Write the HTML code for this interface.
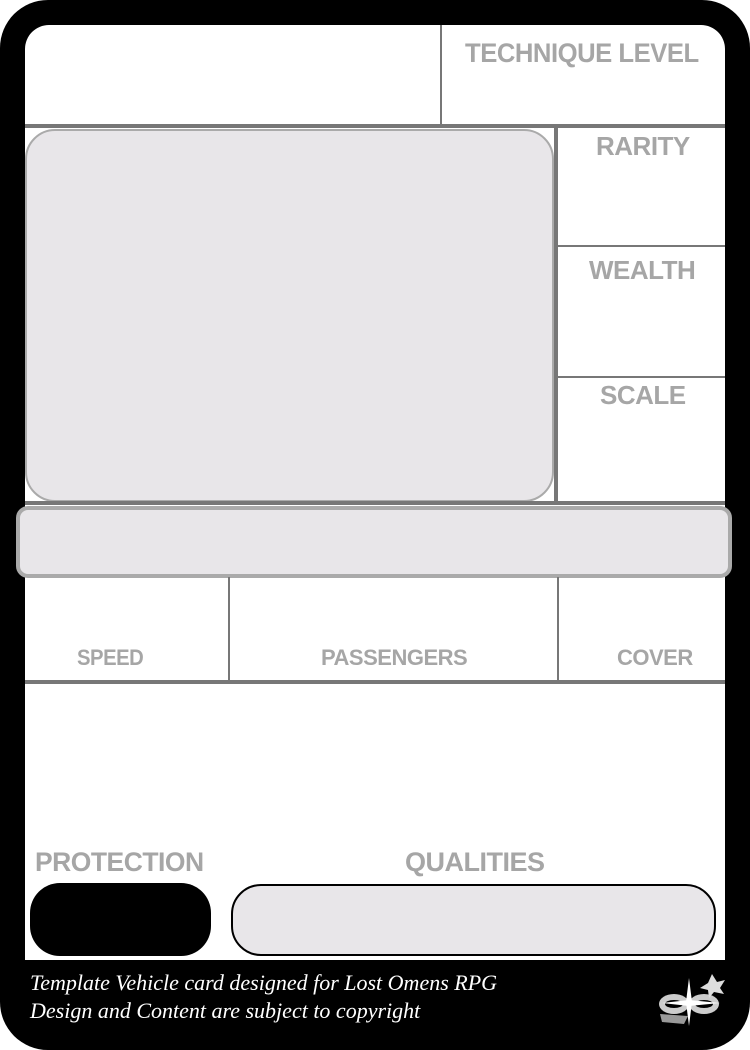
<!DOCTYPE html>
<html><head><meta charset="utf-8"><style>
html,body{margin:0;padding:0;background:#fff;}
body{width:750px;height:1050px;position:relative;overflow:hidden;}
.card{position:absolute;left:0;top:0;width:750px;height:1050px;background:#000;border-radius:48px;}
.inner{position:absolute;left:25px;top:25px;width:700px;height:935px;background:#fff;border-radius:24px 24px 0 0;overflow:hidden;}
.a{position:absolute;}
.lbl{position:absolute;font-family:"Liberation Sans Narrow","Liberation Sans",sans-serif;font-weight:bold;color:#a6a6a6;font-size:26px;letter-spacing:-0.5px;white-space:nowrap;transform-origin:0 0;}
.foot{position:absolute;left:30px;font-family:"Liberation Serif",serif;font-style:italic;color:#fff;font-size:22px;white-space:nowrap;}
</style></head><body>
<div class="card"></div>
<div class="inner"></div>
<div class="a" style="left:440px;top:25px;width:2px;height:101px;background:#777"></div>
<div class="a" style="left:25px;top:124px;width:700px;height:4px;background:#777"></div>
<div class="a" style="left:25px;top:129px;width:525px;height:369px;background:#e8e6e9;border:2px solid #aaa;border-radius:30px"></div>
<div class="a" style="left:554px;top:128px;width:4px;height:376px;background:#777"></div>
<div class="a" style="left:558px;top:245px;width:167px;height:2px;background:#777"></div>
<div class="a" style="left:558px;top:376px;width:167px;height:2px;background:#777"></div>
<div class="a" style="left:25px;top:501px;width:700px;height:4px;background:#777"></div>
<div class="a" style="left:16px;top:506px;width:708px;height:64px;background:#e8e6e9;border:4px solid #aaa;border-radius:12px"></div>
<div class="a" style="left:228px;top:577px;width:2px;height:104px;background:#777"></div>
<div class="a" style="left:557px;top:577px;width:2px;height:104px;background:#777"></div>
<div class="a" style="left:25px;top:680px;width:700px;height:4px;background:#777"></div>
<div class="lbl" style="left:465px;top:38px;font-size:27px;transform:scaleX(0.95)">TECHNIQUE LEVEL</div>
<div class="lbl" style="left:596px;top:131px">RARITY</div>
<div class="lbl" style="left:589px;top:255px">WEALTH</div>
<div class="lbl" style="left:600px;top:380px">SCALE</div>
<div class="lbl" style="left:77px;top:645px;font-size:22px;transform:scaleX(0.92)">SPEED</div>
<div class="lbl" style="left:321px;top:645px;font-size:22px">PASSENGERS</div>
<div class="lbl" style="left:617px;top:645px;font-size:22px">COVER</div>
<div class="lbl" style="left:35px;top:847px;font-size:27px;transform:scaleX(0.98)">PROTECTION</div>
<div class="lbl" style="left:405px;top:847px;font-size:27px">QUALITIES</div>
<div class="a" style="left:30px;top:883px;width:181px;height:73px;background:#000;border-radius:30px"></div>
<div class="a" style="left:231px;top:884px;width:481px;height:68px;background:#e8e6e9;border:2px solid #000;border-radius:30px"></div>
<div class="foot" style="top:970px">Template Vehicle card designed for Lost Omens RPG</div>
<div class="foot" style="top:998px">Design and Content are subject to copyright</div>
<svg class="a" style="left:654px;top:970px" width="72" height="56" viewBox="0 0 72 56">
<ellipse cx="20" cy="34" rx="15" ry="10" fill="#ccc"/>
<ellipse cx="50" cy="34" rx="15" ry="10" fill="#ccc"/>
<ellipse cx="20" cy="34" rx="9" ry="4" fill="#000"/>
<ellipse cx="50" cy="34" rx="9" ry="4" fill="#000"/>
<path d="M35 8 L38 32 L35 56 L32 32Z" fill="#fff"/>
<path d="M8 33 L35 30 L66 33 L35 36Z" fill="#fff"/>
<path d="M58 4 L63 12 L71 10 L66 18 L70 24 L60 22 L55 28 L54 20 L46 18 L54 13Z" fill="#ddd"/>
<path d="M6 44 L34 46 L30 54 L8 52Z" fill="#999"/>
</svg>
</body></html>
